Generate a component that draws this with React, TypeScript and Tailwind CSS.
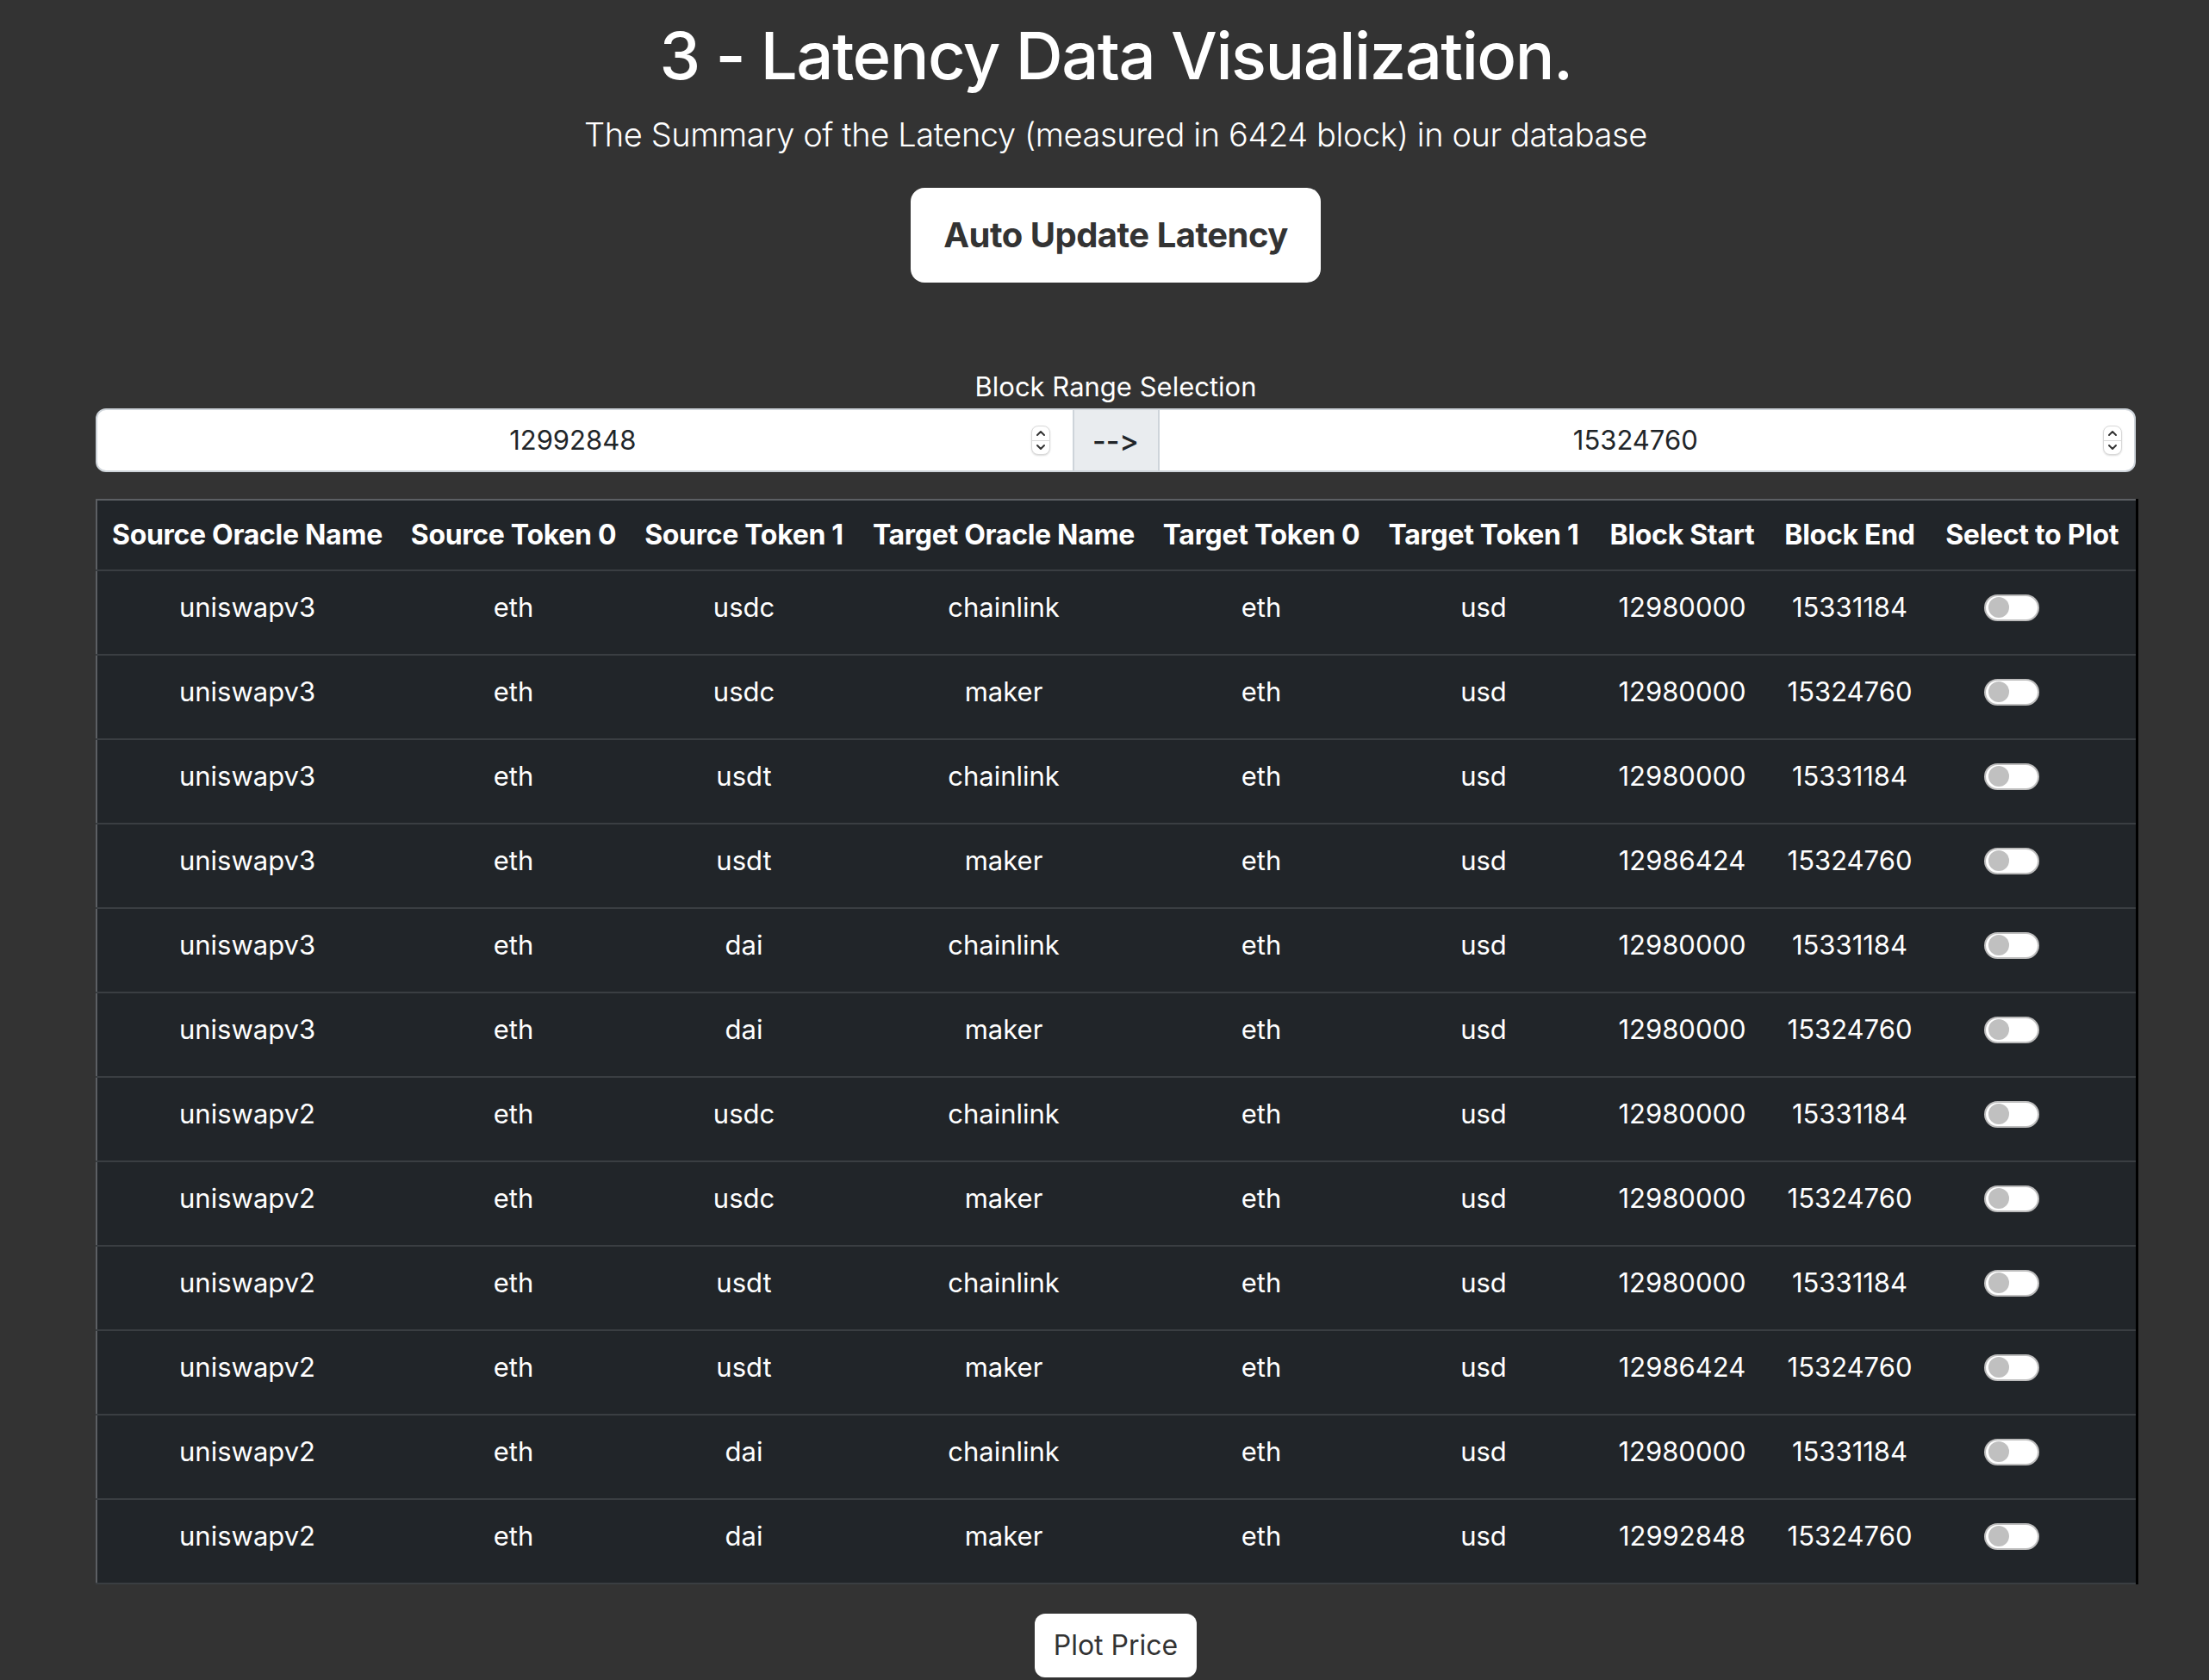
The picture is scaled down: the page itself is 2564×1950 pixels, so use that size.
import React from "react";

const rows: string[][] = [
  ["uniswapv3", "eth", "usdc", "chainlink", "eth", "usd", "12980000", "15331184"],
  ["uniswapv3", "eth", "usdc", "maker", "eth", "usd", "12980000", "15324760"],
  ["uniswapv3", "eth", "usdt", "chainlink", "eth", "usd", "12980000", "15331184"],
  ["uniswapv3", "eth", "usdt", "maker", "eth", "usd", "12986424", "15324760"],
  ["uniswapv3", "eth", "dai", "chainlink", "eth", "usd", "12980000", "15331184"],
  ["uniswapv3", "eth", "dai", "maker", "eth", "usd", "12980000", "15324760"],
  ["uniswapv2", "eth", "usdc", "chainlink", "eth", "usd", "12980000", "15331184"],
  ["uniswapv2", "eth", "usdc", "maker", "eth", "usd", "12980000", "15324760"],
  ["uniswapv2", "eth", "usdt", "chainlink", "eth", "usd", "12980000", "15331184"],
  ["uniswapv2", "eth", "usdt", "maker", "eth", "usd", "12986424", "15324760"],
  ["uniswapv2", "eth", "dai", "chainlink", "eth", "usd", "12980000", "15331184"],
  ["uniswapv2", "eth", "dai", "maker", "eth", "usd", "12992848", "15324760"],
];

const headers = [
  "Source Oracle Name",
  "Source Token 0",
  "Source Token 1",
  "Target Oracle Name",
  "Target Token 0",
  "Target Token 1",
  "Block Start",
  "Block End",
  "Select to Plot",
];

const widths = [349, 270, 265, 338, 260, 256, 205, 184, 241];

function Spinner() {
  return (
    <div className="flex flex-col items-center justify-between w-[22px] h-[34px] rounded-[8px] border border-[#d9d9d9] bg-white shadow-[0_1px_2px_rgba(0,0,0,0.15)]">
      <svg width="12" height="10" viewBox="0 0 12 10" className="mt-[3px]">
        <path d="M2 7 L6 3 L10 7" stroke="#333" strokeWidth="2" fill="none" strokeLinecap="round" strokeLinejoin="round" />
      </svg>
      <div className="w-full h-px bg-[#d9d9d9]" />
      <svg width="12" height="10" viewBox="0 0 12 10" className="mb-[3px]">
        <path d="M2 3 L6 7 L10 3" stroke="#333" strokeWidth="2" fill="none" strokeLinecap="round" strokeLinejoin="round" />
      </svg>
    </div>
  );
}

function Toggle() {
  return (
    <div className="w-[64px] h-[31px] rounded-full bg-white border-2 border-[#bdbdbd] flex items-center px-[3px]">
      <div className="w-[24px] h-[24px] rounded-full bg-[#c0c0c0]" />
    </div>
  );
}

export default function App() {
  return (
    <div
      className="min-h-[1950px] bg-[#333333] pl-[111px] pr-[85px] text-white"
      style={{ fontFamily: "Inter, 'Noto Sans', sans-serif" }}
    >
      <div className="flex flex-col items-center">
        <h1 className="mt-[16px] text-[76px] leading-[96px] font-medium tracking-[-1.5px]">
          3 - Latency Data Visualization.
        </h1>
        <p className="mt-[20px] text-[38px] leading-[48px] font-light tracking-[-0.4px]">
          The Summary of the Latency (measured in 6424 block) in our database
        </p>
        <button className="mt-[38px] w-[476px] h-[110px] rounded-[16px] bg-white text-[#333333] text-[40px] font-bold tracking-[-0.5px]">
          Auto Update Latency
        </button>
        <div className="mt-[101px] text-[31px] leading-[40px] font-normal">Block Range Selection</div>
      </div>

      <div className="mt-[5px] flex h-[74px] rounded-[12px] border-2 border-[#ced4da] bg-white overflow-hidden text-[#212529] text-[31px]">
        <div className="flex-1 flex items-center">
          <span className="flex-1 text-center pl-[20px]">12992848</span>
          <div className="mr-[26px]">
            <Spinner />
          </div>
        </div>
        <div className="w-[101px] flex items-center justify-center bg-[#e9ecef] border-x-2 border-[#ced4da] text-[34px] font-medium [font-feature-settings:'calt'_0,'liga'_0]">
          --&gt;
        </div>
        <div className="flex-1 flex items-center">
          <span className="flex-1 text-center pl-[10px]">15324760</span>
          <div className="mr-[14px]">
            <Spinner />
          </div>
        </div>
      </div>

      <table className="mt-[31px] w-[2368px] table-fixed border-collapse bg-[#212529] border-l-2 border-t-2 border-l-[#5c5f63] border-t-[#5c5f63] border-r-[3px] border-r-black">
        <colgroup>
          {widths.map((w, i) => (
            <col key={i} style={{ width: w }} />
          ))}
        </colgroup>
        <thead>
          <tr className="h-[82px] border-b-2 border-[#3a3e42]">
            {headers.map((h) => (
              <th key={h} className="text-center text-[32px] font-bold tracking-[-0.3px] whitespace-nowrap px-0">
                {h}
              </th>
            ))}
          </tr>
        </thead>
        <tbody>
          {rows.map((r, i) => (
            <tr key={i} className="h-[98px] border-b-2 border-[#3a3e42]">
              {r.map((c, j) => (
                <td key={j} className="text-center text-[31px] font-normal pb-[12px]">
                  {c}
                </td>
              ))}
              <td className="pl-[64px] pb-[12px]">
                <Toggle />
              </td>
            </tr>
          ))}
        </tbody>
      </table>

      <div className="flex justify-center mt-[34px]">
        <button className="w-[188px] h-[74px] rounded-[12px] bg-white text-[#333333] text-[32px] font-normal">
          Plot Price
        </button>
      </div>
    </div>
  );
}
